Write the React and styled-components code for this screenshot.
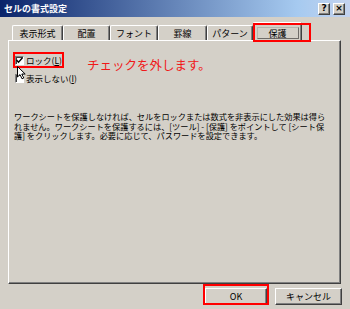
import styled, { createGlobalStyle } from "styled-components";

const GlobalStyle = createGlobalStyle`
  html, body {
    margin: 0;
    padding: 0;
    background: #d4d0c8;
  }
  body {
    font-family: "Noto Sans CJK JP", "Noto Sans", sans-serif;
  }
`;

const tabs = [
  { label: "表示形式", width: 51 },
  { label: "配置", width: 47 },
  { label: "フォント", width: 48 },
  { label: "罫線", width: 49 },
  { label: "パターン", width: 46 },
  { label: "保護", width: 49, active: true },
];

const App = () => {
  return (
    <Window>
      <GlobalStyle />
      <TitleBar>
        <TitleText>セルの書式設定</TitleText>
        <TitleButtons>
          <TitleButton>?</TitleButton>
          <TitleButton>×</TitleButton>
        </TitleButtons>
      </TitleBar>
      <Body>
        <TabRow>
          {tabs.map((tab) => (
            <Tab key={tab.label} $width={tab.width} $active={tab.active}>
              {tab.active ? <TabFocus>{tab.label}</TabFocus> : tab.label}
              {tab.active && <RedBox $inset="0 -10px -1px -1px" />}
            </Tab>
          ))}
        </TabRow>
        <Panel>
          <LockLine>
            <CheckRow $marked>
              <CheckBox>
                <svg width="7" height="7" viewBox="0 0 7 7">
                  <path d="M0.5 3 L2.5 5.2 L6.5 0.8" fill="none" stroke="#000" strokeWidth="1.4" />
                </svg>
              </CheckBox>
              <span>
                ロック(<u>L</u>)
              </span>
            </CheckRow>
            <Note>チェックを外します。</Note>
          </LockLine>
          <CheckRow>
            <CheckBox />
            <span>
              表示しない(<u>I</u>)
            </span>
            <Cursor width="9" height="14" viewBox="0 0 9 14">
              <path d="M0.5 0.5 L0.5 11 L3 8.6 L5 12.8 L6.8 12 L4.8 8 L8.2 8 Z" fill="#fff" stroke="#000" strokeWidth="1" />
            </Cursor>
          </CheckRow>
          <Description>
            ワークシートを保護しなければ、セルをロックまたは数式を非表示にした効果は得られません。ワークシートを保護するには、[ツール] - [保護] をポイントして [シート保護] をクリックします。必要に応じて、パスワードを設定できます。
          </Description>
        </Panel>
        <Footer>
          <Button $width={62}>
            OK
            <RedBox $inset="-5px -3px -1px -3px" />
          </Button>
          <Button $width={67}>キャンセル</Button>
        </Footer>
      </Body>
    </Window>
  );
};

export default App;

const Window = styled.div`
  width: 350px;
  height: 309px;
  display: flex;
  flex-direction: column;
  background: #d4d0c8;
  overflow: hidden;
`;

const TitleBar = styled.div`
  height: 17px;
  display: flex;
  align-items: center;
  justify-content: space-between;
  padding: 0 5px 0 4px;
  background: linear-gradient(to right, #0a246a, #a6caf0 85%, #c4d3ef);
`;

const TitleText = styled.div`
  color: #fff;
  font-size: 9px;
  font-weight: bold;
  line-height: 1;
`;

const TitleButtons = styled.div`
  display: flex;
  gap: 3px;
`;

const TitleButton = styled.div`
  width: 12px;
  height: 12px;
  box-sizing: border-box;
  display: flex;
  align-items: center;
  justify-content: center;
  background: #d4d0c8;
  border: 1px solid;
  border-color: #fff #404040 #404040 #fff;
  box-shadow: inset -1px -1px #808080;
  font-family: "DejaVu Sans", sans-serif;
  font-size: 9px;
  font-weight: bold;
  line-height: 1;
  color: #000;
`;

const Body = styled.div`
  flex: 1;
  display: flex;
  flex-direction: column;
  padding: 5px 8px 0 8px;
`;

const TabRow = styled.div`
  height: 18px;
  display: flex;
  align-items: flex-end;
  padding-left: 4px;
  position: relative;
  z-index: 1;
`;

const Tab = styled.div`
  position: relative;
  width: ${(p) => p.$width}px;
  height: ${(p) => (p.$active ? 19 : 15)}px;
  margin-bottom: ${(p) => (p.$active ? -1 : 0)}px;
  box-sizing: border-box;
  display: flex;
  align-items: ${(p) => (p.$active ? "flex-start" : "center")};
  justify-content: center;
  padding-top: ${(p) => (p.$active ? 4 : 0)}px;
  background: #d4d0c8;
  border-top: 1px solid #fff;
  border-left: 1px solid #fff;
  border-right: 1px solid #404040;
  border-radius: 2px 2px 0 0;
  box-shadow: inset -1px 0 #808080;
  font-size: 9px;
  line-height: 1;
  color: #000;
`;

const TabFocus = styled.span`
  width: 40px;
  height: 10px;
  display: flex;
  align-items: center;
  justify-content: center;
  border: 1px solid;
  border-color: #b8b5ae #6e6c68 #6e6c68 #b8b5ae;
`;

const RedBox = styled.div`
  position: absolute;
  inset: ${(p) => p.$inset};
  border: 2px solid #f00;
  pointer-events: none;
`;

const Panel = styled.div`
  width: 333px;
  height: 244px;
  box-sizing: border-box;
  display: flex;
  flex-direction: column;
  padding: 13px 0 0 6px;
  background: #d4d0c8;
  border: 1px solid;
  border-color: #fff #404040 #404040 #fff;
  box-shadow: inset -1px -1px #808080;
`;

const LockLine = styled.div`
  display: flex;
  align-items: flex-start;
`;

const CheckRow = styled.div`
  position: relative;
  align-self: flex-start;
  height: 12px;
  display: flex;
  align-items: center;
  gap: 2px;
  margin-bottom: 3px;
  font-size: 8.5px;
  line-height: 1;
  color: #000;
  outline: ${(p) => (p.$marked ? "2px solid #f00" : "none")};

  u {
    text-decoration-thickness: 1px;
  }
`;

const CheckBox = styled.div`
  width: 9px;
  height: 9px;
  box-sizing: border-box;
  display: flex;
  align-items: center;
  justify-content: center;
  background: #fff;
  border: 1px solid;
  border-color: #808080 #fff #fff #808080;
  box-shadow: inset 1px 1px #404040;
`;

const Cursor = styled.svg`
  position: absolute;
  left: 2px;
  top: -6px;
`;

const Note = styled.div`
  margin: 4px 0 0 25px;
  color: #f01818;
  font-size: 12.5px;
  line-height: 14px;
`;

const Description = styled.div`
  width: 317px;
  margin: 25px 0 0 -1px;
  font-size: 8.2px;
  line-height: 9.6px;
  color: #000;
`;

const Footer = styled.div`
  display: flex;
  justify-content: flex-end;
  gap: 8px;
  padding-top: 4px;
`;

const Button = styled.div`
  position: relative;
  width: ${(p) => p.$width}px;
  height: 17px;
  box-sizing: border-box;
  display: flex;
  align-items: center;
  justify-content: center;
  background: #d4d0c8;
  border: 1px solid;
  border-color: #fff #404040 #404040 #fff;
  box-shadow: inset -1px -1px #808080;
  font-size: 9px;
  line-height: 1;
  color: #000;
`;
